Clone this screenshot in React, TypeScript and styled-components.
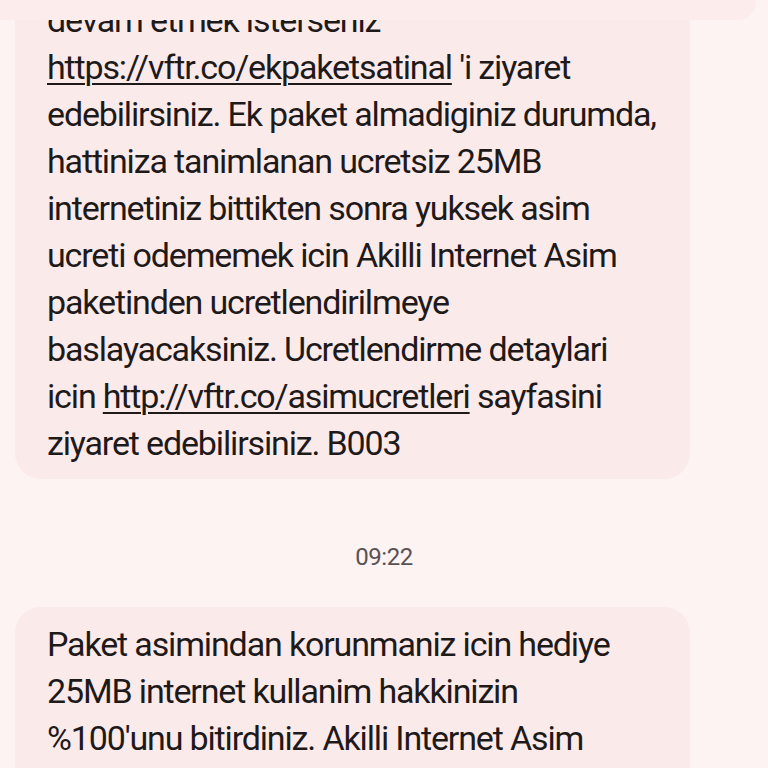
import React from 'react';
import styled, { createGlobalStyle } from 'styled-components';

const Global = createGlobalStyle`
  html, body {
    margin: 0;
    padding: 0;
    background: #fdf3f3;
  }
  body {
    font-family: Roboto, "Noto Sans", sans-serif;
    overflow: hidden;
  }
`

const Screen = styled.div`
  position: relative;
  width: 768px;
  height: 768px;
  overflow: hidden;
  background: #fdf3f3;
`

const TopBar = styled.div`
  position: absolute;
  top: 0;
  left: 0;
  width: 756px;
  height: 20px;
  background: #fcecec;
  border-bottom-right-radius: 18px;
  z-index: 2;
`

const Thread = styled.div`
  display: flex;
  flex-direction: column;
  margin-top: -17px;
  padding: 0 78px 0 15px;
`

const Bubble = styled.div`
  background: #fbeaea;
  border-radius: 26px;
  padding: 14px 20px 12px 32px;
  color: #1f1a1a;
  font-size: 34px;
  line-height: 47px;
  letter-spacing: -1.15px;
  white-space: nowrap;
`

const Link = styled.span`
  text-decoration: underline;
  text-decoration-thickness: 2px;
  text-underline-offset: 4px;
`

const Stamp = styled.div`
  text-align: center;
  color: #5a5152;
  font-size: 24px;
  letter-spacing: -0.5px;
  margin: 64px -78px 36px -15px;
`

const App = () => {
    return (
        <Screen>
            <Global />
            <TopBar />
            <Thread>
                <Bubble>
                    devam etmek isterseniz<br />
                    <Link>https://vftr.co/ekpaketsatinal</Link> 'i ziyaret<br />
                    edebilirsiniz. Ek paket almadiginiz durumda,<br />
                    hattiniza tanimlanan ucretsiz 25MB<br />
                    internetiniz bittikten sonra yuksek asim<br />
                    ucreti odememek icin Akilli Internet Asim<br />
                    paketinden ucretlendirilmeye<br />
                    baslayacaksiniz. Ucretlendirme detaylari<br />
                    icin <Link>http://vftr.co/asimucretleri</Link> sayfasini<br />
                    ziyaret edebilirsiniz. B003
                </Bubble>
                <Stamp>09:22</Stamp>
                <Bubble>
                    Paket asimindan korunmaniz icin hediye<br />
                    25MB internet kullanim hakkinizin<br />
                    %100'unu bitirdiniz. Akilli Internet Asim<br />
                    paketinden ucretlendirilmeye
                </Bubble>
            </Thread>
        </Screen>
    )
}

export default App;
